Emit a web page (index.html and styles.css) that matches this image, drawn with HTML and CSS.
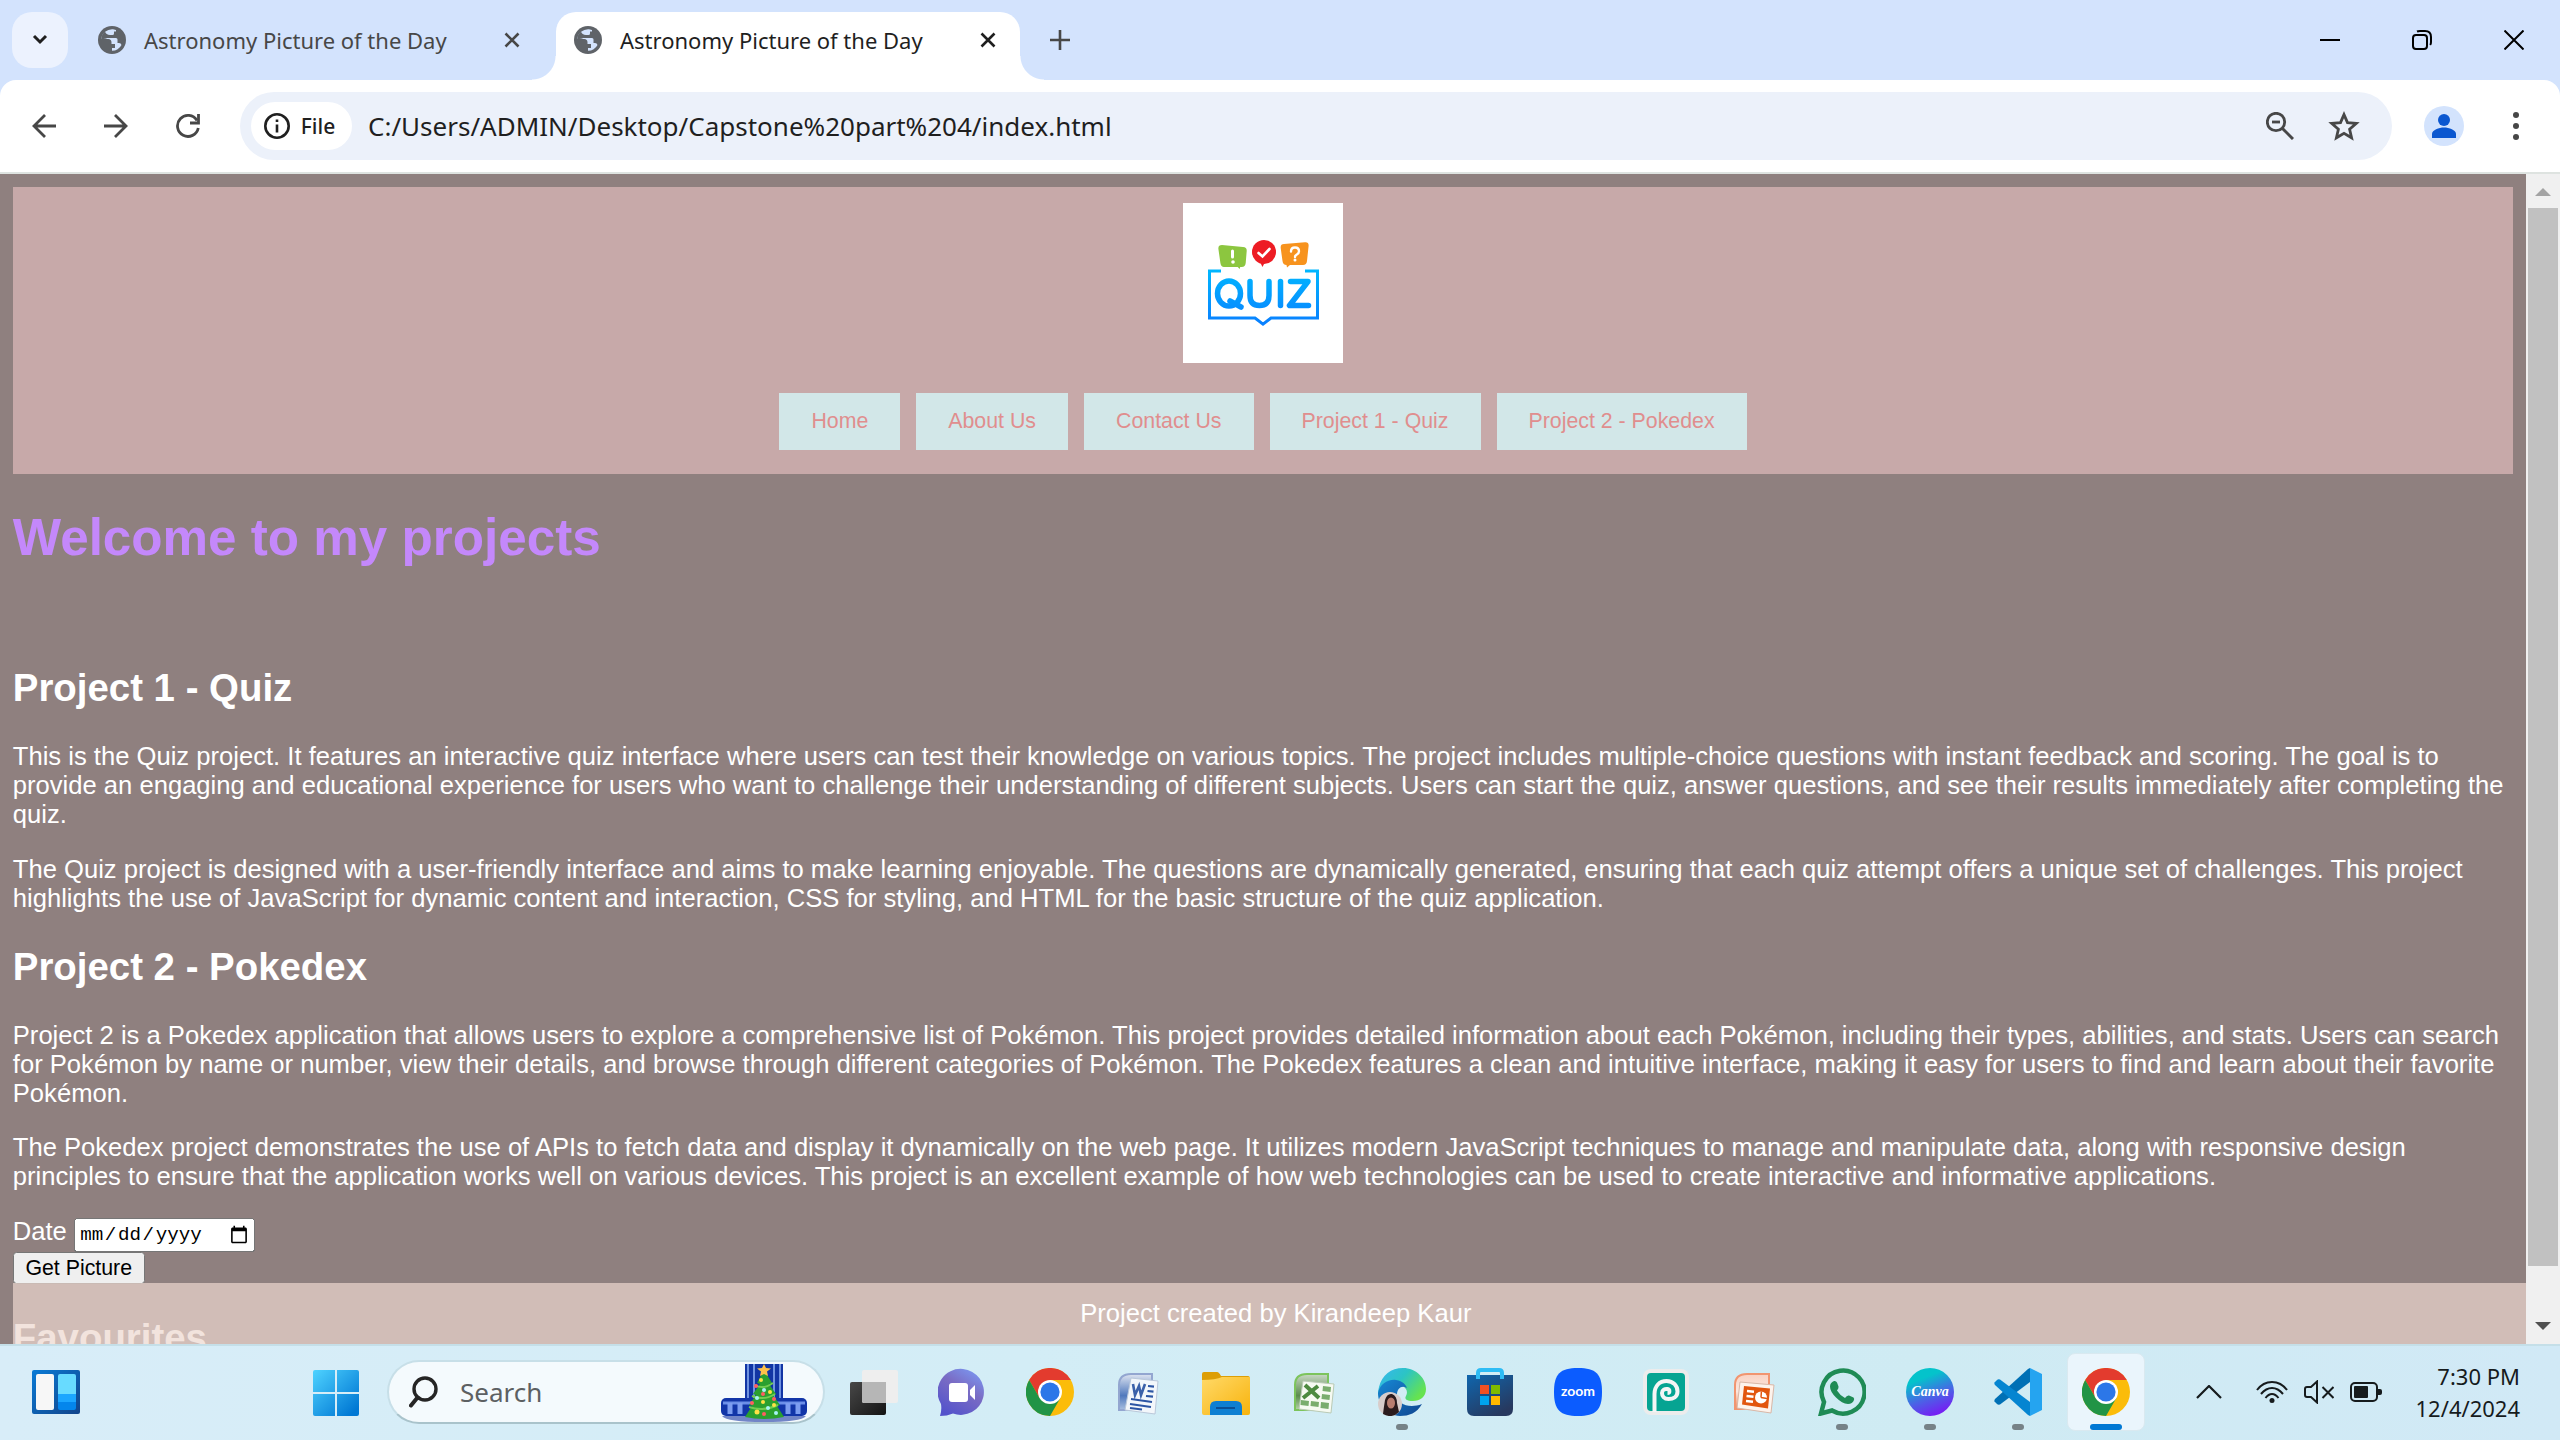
FILE: index.html
```html
<!DOCTYPE html>
<html lang="en-US">
<head>
<meta charset="utf-8">
<title>Astronomy Picture of the Day</title>
<link rel="stylesheet" href="styles.css">
</head>
<body>
<svg class="defs" aria-hidden="true">
  <defs>
    <linearGradient id="gStart" x1="0" y1="0" x2="1" y2="1"><stop offset="0" stop-color="#4fd3ff"/><stop offset=".9" stop-color="#0078d4"/></linearGradient>
    <linearGradient id="gWidget" x1="0" y1="0" x2="1" y2="1"><stop offset="0" stop-color="#0a7bd6"/><stop offset="1" stop-color="#12448a"/></linearGradient>
    <linearGradient id="gDark" x1="0" y1="0" x2="1" y2="1"><stop offset="0" stop-color="#484848"/><stop offset="1" stop-color="#141414"/></linearGradient>
    <linearGradient id="gChat" x1=".9" y1="0" x2=".3" y2="1"><stop offset="0" stop-color="#7b9bf5"/><stop offset=".45" stop-color="#7a6cc4"/><stop offset="1" stop-color="#5453cb"/></linearGradient>
    <linearGradient id="gFolder" x1="0" y1="0" x2="1" y2="1"><stop offset="0" stop-color="#ffd968"/><stop offset="1" stop-color="#f8b30c"/></linearGradient>
    <linearGradient id="gWord" x1="0" y1="0" x2="0" y2="1"><stop offset="0" stop-color="#dfe5f1"/><stop offset=".6" stop-color="#5079bd"/><stop offset="1" stop-color="#a9bfe0"/></linearGradient>
    <linearGradient id="gExcel" x1="0" y1="0" x2="0" y2="1"><stop offset="0" stop-color="#c9d8c5"/><stop offset=".6" stop-color="#5b8c4d"/><stop offset="1" stop-color="#b6d3a8"/></linearGradient>
    <linearGradient id="gPpt" x1="0" y1="0" x2="0" y2="1"><stop offset="0" stop-color="#f9d2c2"/><stop offset=".5" stop-color="#fbe7df"/><stop offset="1" stop-color="#ef8a5e"/></linearGradient>
    <linearGradient id="gEdgeTop" x1="0" y1="0" x2="1" y2=".6"><stop offset="0" stop-color="#38b6f2"/><stop offset=".5" stop-color="#2cc4c4"/><stop offset="1" stop-color="#66e34f"/></linearGradient>
    <linearGradient id="gEdgeLow" x1="0" y1="0" x2="1" y2="1"><stop offset="0" stop-color="#1788d4"/><stop offset="1" stop-color="#0f4590"/></linearGradient>
    <linearGradient id="gStore" x1="0" y1="0" x2=".6" y2="1"><stop offset="0" stop-color="#0f66ae"/><stop offset="1" stop-color="#27395f"/></linearGradient>
    <linearGradient id="gCanva" x1=".3" y1="0" x2=".7" y2="1"><stop offset=".2" stop-color="#04c3cb"/><stop offset=".6" stop-color="#4a63e6"/><stop offset="1" stop-color="#7c14f5"/></linearGradient>
    <linearGradient id="gQuiz" gradientUnits="userSpaceOnUse" x1="0" y1="66" x2="0" y2="124"><stop offset="0" stop-color="#00b8ff"/><stop offset="1" stop-color="#0a7dff"/></linearGradient>
    <symbol id="globe" viewBox="0 0 28 28">
      <circle cx="14" cy="14" r="14" fill="#5f6368"/>
      <path d="M15 3.200A11 11 0 0 0 3.200 13h7q3.300 0 3.300 3.500v1.500h3.500v4h-3v2.800A11 11 0 0 0 23.500 19q-.5-2-2.500-2h-1.500v-3.500q0-1.500-1.500-1.500h-6V9h2.500q1.500 0 1.500-1.500V5.500h2V4z" fill="#d3e3fd"/>
      <path d="M3.200 13A11 11 0 0 1 7 5.600q1 3.400 5 3.400v3H9q-1 1-5.800 1z" fill="#5f6368"/>
    </symbol>
    <symbol id="cross" viewBox="0 0 16 16"><path d="M1.500 1.500l13 13m0-13l-13 13" stroke="currentColor" stroke-width="2.600"/></symbol>
    <symbol id="chrome" viewBox="0 0 48 48">
      <circle cx="24" cy="24" r="24" fill="#fbbc0a"/>
      <path d="M24 12H44.800A24 24 0 0 0 3.200 12L13.600 30z" fill="#e33b2e"/>
      <path d="M13.600 30L3.200 12A24 24 0 0 0 24 48L34.400 30 24 24z" fill="#219446"/>
      <circle cx="24" cy="24" r="12" fill="#fff"/><circle cx="24" cy="24" r="9.600" fill="#2c77e8"/>
    </symbol>
  </defs>
</svg>

<header class="browser">
  <div class="tabstrip">
    <button class="tab-search" aria-label="Search tabs"><svg width="16" height="12" viewBox="0 0 16 12" fill="none"><path d="M2 2l6 6 6-6" stroke="#1f1f1f" stroke-width="3"/></svg></button>
    <div class="tab">
      <svg class="favicon"><use href="#globe"/></svg><span class="tab-title">Astronomy Picture of the Day</span>
      <button class="tab-close" aria-label="Close tab"><svg width="16" height="16"><use href="#cross"/></svg></button>
    </div>
    <div class="tab tab-active">
      <svg class="favicon"><use href="#globe"/></svg><span class="tab-title">Astronomy Picture of the Day</span>
      <button class="tab-close" aria-label="Close tab"><svg width="16" height="16"><use href="#cross"/></svg></button>
    </div>
    <button class="new-tab" aria-label="New tab"><svg width="20" height="20" viewBox="0 0 20 20"><path d="M10 0v20M0 10h20" stroke="#474747" stroke-width="2.600"/></svg></button>
    <div class="window-controls">
      <button aria-label="Minimize"><svg width="20" height="20" viewBox="0 0 20 20"><path d="M0 10h20" stroke="#000" stroke-width="2"/></svg></button>
      <button aria-label="Restore"><svg width="20" height="20" viewBox="0 0 20 20" fill="none" stroke="#000" stroke-width="2"><rect x="1" y="5" width="14" height="14" rx="3"/><path d="M5 1.500Q6 1 8 1h5q6 0 6 6v5q0 2-.8 3"/></svg></button>
      <button aria-label="Close"><svg width="20" height="20" viewBox="0 0 20 20"><path d="M.5.500l19 19m0-19l-19 19" stroke="#000" stroke-width="2"/></svg></button>
    </div>
  </div>
  <div class="toolbar">
    <button class="tool" aria-label="Back"><svg width="24" height="24" viewBox="0 0 24 24" fill="none" stroke="#474747" stroke-width="2.800"><path d="M24 12H2M13 1L2 12l11 11"/></svg></button>
    <button class="tool" aria-label="Forward"><svg width="24" height="24" viewBox="0 0 24 24" fill="none" stroke="#474747" stroke-width="2.800"><path d="M0 12h22M11 1l11 11-11 11"/></svg></button>
    <button class="tool" aria-label="Reload"><svg width="24" height="24" viewBox="0 0 24 24" fill="none" stroke="#474747" stroke-width="2.800"><path d="M21 6.500A10.500 10.500 0 1 0 22.300 14"/><path d="M22.500 0v9H14"/></svg></button>
    <div class="omnibox">
      <button class="chip"><svg width="26" height="26" viewBox="0 0 26 26"><circle cx="13" cy="13" r="11.700" fill="none" stroke="#1f1f1f" stroke-width="2.600"/><path d="M13 11.500v8M13 6.500v2.600" stroke="#1f1f1f" stroke-width="2.600"/></svg>File</button>
      <input class="address" type="text" aria-label="Address" value="C:/Users/ADMIN/Desktop/Capstone%20part%204/index.html">
      <button class="in-box" aria-label="Zoom"><svg width="28" height="28" viewBox="0 0 28 28" fill="none" stroke="#474747"><circle cx="10" cy="10" r="8.700" stroke-width="2.800"/><path d="M16.500 16.500L27 27" stroke-width="3"/><path d="M6 10h8" stroke-width="2.800"/></svg></button>
      <button class="in-box" aria-label="Bookmark"><svg width="32" height="30" viewBox="0 0 32 30"><path d="M16 3.600l3.500 8 8.800.8-6.700 5.800 2 8.600-7.600-4.500-7.600 4.500 2-8.600-6.700-5.800 8.800-.8z" fill="none" stroke="#474747" stroke-width="2.800"/></svg></button>
    </div>
    <button class="avatar" aria-label="Profile"><svg width="40" height="40" viewBox="0 0 40 40"><circle cx="20" cy="20" r="20" fill="#d3e3fd"/><circle cx="20" cy="14" r="6" fill="#0b57d0"/><path d="M8 32v-4c0-4 7-6.500 12-6.500S32 24 32 28v4z" fill="#0b57d0"/></svg></button>
    <button class="menu" aria-label="Menu"><svg width="6" height="28" viewBox="0 0 6 28" fill="#474747"><circle cx="3" cy="3" r="3"/><circle cx="3" cy="14" r="3"/><circle cx="3" cy="25" r="3"/></svg></button>
  </div>
</header>

<div class="viewport">
  <div class="document">
    <div class="page">
      <header class="site-header">
        <svg class="logo" viewBox="0 0 160 160" role="img" aria-label="Quiz">
          <rect width="160" height="160" fill="#fff"/>
          <path d="M39 42l21 2q4 .4 3.700 4l-1 12q-.4 4-4 4h-1.500l-.5 2-2-2H41q-3 0-3.600-4l-2-14q-.4-4 3.600-4z" fill="#8cc63f"/>
          <path d="M49.500 48v6" stroke="#fff" stroke-width="3" stroke-linecap="round"/><circle cx="50" cy="59" r="1.800" fill="#fff"/>
          <circle cx="81" cy="49" r="12" fill="#ed1c24"/><path d="M77 59h5l-2.500 5z" fill="#ed1c24"/>
          <path d="M75.500 50l4 3.500 7-7.500" fill="none" stroke="#fff" stroke-width="2.600" stroke-linecap="round"/>
          <path d="M101 41l21-1.700q4-.3 3.600 3.700l-1.600 15q-.4 4-4 4h-13l-3 2.500-.5-2.500q-3.500 0-4-4l-1.800-13q-.4-4 3.300-4z" fill="#f7931e"/>
          <path d="M108 48.500q0-4 4-4t4 3.700q0 2-2.200 3.300-1.800 1-1.800 2.500" fill="none" stroke="#fff" stroke-width="2.400" stroke-linecap="round"/><circle cx="112" cy="57" r="1.500" fill="#fff"/>
          <g fill="none" stroke="url(#gQuiz)" stroke-width="3">
            <path d="M38 68H26.500v47H72l8 6.200 8-6.200h46.500V68H122"/>
          </g>
          <g fill="none" stroke="url(#gQuiz)" stroke-width="5.500" stroke-linecap="round" stroke-linejoin="round">
            <ellipse cx="46" cy="90.500" rx="11.500" ry="12.500"/><path d="M47 98l11 6"/>
            <path d="M67 78.500v14q0 10 9.500 10t9.500-10v-14"/><path d="M97.500 78.500v24"/><path d="M107.500 78.500h17.500l-18.500 24H125.500"/>
          </g>
        </svg>
        <nav class="nav">
          <button>Home</button>
          <button>About Us</button>
          <button>Contact Us</button>
          <button>Project 1 - Quiz</button>
          <button>Project 2 - Pokedex</button>
        </nav>
      </header>
      <h1>Welcome to my projects</h1>
      <main>
        <section>
          <h2>Project 1 - Quiz</h2>
          <p>This is the Quiz project. It features an interactive quiz interface where users can test their knowledge on various topics. The project includes multiple-choice questions with instant feedback and scoring. The goal is to provide an engaging and educational experience for users who want to challenge their understanding of different subjects. Users can start the quiz, answer questions, and see their results immediately after completing the quiz.</p>
          <p>The Quiz project is designed with a user-friendly interface and aims to make learning enjoyable. The questions are dynamically generated, ensuring that each quiz attempt offers a unique set of challenges. This project highlights the use of JavaScript for dynamic content and interaction, CSS for styling, and HTML for the basic structure of the quiz application.</p>
        </section>
        <section>
          <h2>Project 2 - Pokedex</h2>
          <p>Project 2 is a Pokedex application that allows users to explore a comprehensive list of Pokémon. This project provides detailed information about each Pokémon, including their types, abilities, and stats. Users can search for Pokémon by name or number, view their details, and browse through different categories of Pokémon. The Pokedex features a clean and intuitive interface, making it easy for users to find and learn about their favorite Pokémon.</p>
          <p>The Pokedex project demonstrates the use of APIs to fetch data and display it dynamically on the web page. It utilizes modern JavaScript techniques to manage and manipulate data, along with responsive design principles to ensure that the application works well on various devices. This project is an excellent example of how web technologies can be used to create interactive and informative applications.</p>
        </section>
        <form class="picture-form">
          <div><label for="date">Date</label> <input type="date" id="date"></div>
          <button type="button">Get Picture</button>
        </form>
        <h2>Favourites</h2>
      </main>
      <footer class="site-footer">Project created by Kirandeep Kaur</footer>
    </div>
  </div>
  <div class="scrollbar" aria-hidden="true">
    <svg width="16" height="8" viewBox="0 0 16 8"><path d="M0 8L8 0l8 8z" fill="#a3a3a3"/></svg>
    <div class="track"><div class="thumb"></div></div>
    <svg width="16" height="8" viewBox="0 0 16 8"><path d="M0 0l8 8 8-8z" fill="#505050"/></svg>
  </div>
</div>

<footer class="taskbar">
  <button class="app" aria-label="Widgets"><svg width="48" height="48" viewBox="0 0 48 48"><rect y="2" width="48" height="44" rx="2" fill="url(#gWidget)"/><rect x="4" y="6" width="18" height="36" rx="2" fill="#f7f7f7"/><path d="M26 26V8q0-2 2-2h14q2 0 2 2v18z" fill="#68dbff"/><path d="M26 26h18v8H26z" fill="#1ca6ff"/><path d="M26 34h18v6q0 2-2 2H28q-2 0-2-2z" fill="#0486ec"/></svg></button>
  <div class="apps">
    <button class="app start" aria-label="Start"><svg width="48" height="48" viewBox="0 0 48 48" fill="url(#gStart)"><path d="M3 2h20v22H1V4q0-2 2-2zM25 2h20q2 0 2 2v20H25zM1 26h22v22H3q-2 0-2-2zM25 26h22v20q0 2-2 2H25z"/></svg></button>
    <label class="search">
      <svg width="29" height="32" viewBox="0 0 29 32" fill="none" stroke="#252525"><circle cx="16" cy="13" r="11" stroke-width="3.400"/><path d="M8.500 21.500L2 29.500" stroke-width="4" stroke-linecap="round"/></svg>
      <input type="search" placeholder="Search" aria-label="Search">
      <svg width="86" height="60" viewBox="0 0 86 60">
        <path d="M24 2h38v36H24z" fill="#1235a4"/><path d="M27 2v36M33 2v36M53 2v36M59 2v36" stroke="#6f92e0" stroke-width="2"/>
        <rect y="36" width="86" height="18" rx="5" fill="#1235a8"/><path d="M2 41h82" stroke="#6c8fe8" stroke-width="3"/><path d="M9 41v11M19 41v11M67 41v11M77 41v11" stroke="#7d9df0" stroke-width="5"/>
        <path d="M1 54h84q-5 6-42 6T1 54z" fill="#7285c7"/>
        <path d="M43 8l8 13-3 1 7 10-3 1 7 10-3 1 7 11q-20 4-39 0l7-11-3-1 7-10-3-1 7-10-3-1z" fill="#2ba02f"/>
        <path d="M34 23q8 5 18-2M31 34q12 5 23-2M28 45q14 5 29-2" fill="none" stroke="#72cd50" stroke-width="2"/>
        <path d="M43 2l2 4 5 .5-4 3 1 4.500-4-2-4 2 1-4.500-4-3 5-.5z" fill="#ffc24a"/>
        <g fill="#ffe145"><circle cx="40" cy="18" r="2"/><circle cx="49" cy="30" r="2"/><circle cx="42" cy="40" r="2"/><circle cx="36" cy="50" r="2.500"/><circle cx="53" cy="43" r="2"/></g>
        <g fill="#ff5d62"><circle cx="35" cy="24" r="2"/><circle cx="42" cy="32" r="2"/><circle cx="53" cy="37" r="2"/><circle cx="31" cy="41" r="2"/><circle cx="43" cy="52" r="2"/></g>
        <g fill="#a7f3f5"><circle cx="43" cy="28" r="2"/><circle cx="36" cy="36" r="2"/><circle cx="47" cy="46" r="2"/><circle cx="55" cy="51" r="2"/></g>
      </svg>
    </label>
    <button class="app" aria-label="Task view"><svg width="48" height="48" viewBox="0 0 48 48"><rect y="14" width="36" height="33" rx="2" fill="url(#gDark)"/><rect x="12" y="2" width="36" height="33" rx="2" fill="#eee"/><path d="M12 14h24v21H14q-2 0-2-2z" fill="#b6b6b6"/></svg></button>
    <button class="app" aria-label="Chat"><svg width="48" height="48" viewBox="0 0 48 48"><path d="M25 1a23 23 0 1 1-10 44.500Q9 48 2 48q2-6 1-12A23 23 0 0 1 25 1z" fill="url(#gChat)"/><rect x="11" y="15" width="19" height="19" rx="3" fill="#fff"/><path d="M32 22l5-5v15l-5-5z" fill="#fff"/></svg></button>
    <button class="app" aria-label="Chrome"><svg width="48" height="48"><use href="#chrome"/></svg></button>
    <button class="app" aria-label="Word"><svg width="48" height="48" viewBox="0 0 48 48"><path d="M5 42V17Q5 6 17 6h21v32l-5 4z" fill="url(#gWord)" stroke="#93a6d0" stroke-width="2"/><path d="M17 10l27 3-3 33-30-4z" fill="#f3f7fb" stroke="#bac8da"/><path d="M19 16l2 11 4-9 2 9 4-11" fill="none" stroke="#3b61a9" stroke-width="2.600"/><path d="M34 18l6 .6M33.500 23l6 .6M32 28l7 .7M17 31l21 3M16 36l21 3M16 40l12 1.500" stroke="#2c55a4" stroke-width="2.200"/></svg></button>
    <button class="app" aria-label="File Explorer"><svg width="48" height="48" viewBox="0 0 48 48"><path d="M0 12V6q0-2 2-2h13q2 0 4 4h27q2 0 2 3v4H0z" fill="#dd9e06"/><path d="M0 12q14 0 20-3h28v36q0 2-2 2H2q-2 0-2-2z" fill="url(#gFolder)"/><path d="M8 47V39q0-6 6-6h20q6 0 6 6v8z" fill="#0e7fd2"/><path d="M14 40h19" stroke="#0a4f95" stroke-width="2"/></svg></button>
    <button class="app" aria-label="Excel"><svg width="48" height="48" viewBox="0 0 48 48"><path d="M5 42V17Q5 6 17 6h21v32l-5 4z" fill="url(#gExcel)" stroke="#7cc45c" stroke-width="2"/><path d="M13 13l31 3-3 29-32-4z" fill="#f6faf1" stroke="#bacab5"/><path d="M15 17l14 13M28 18L13 30" stroke="#4d8a3f" stroke-width="4"/><path d="M33 18l8 1-.5 5-8-1zM32 26l8 1-.5 5-8-1zM31 34l8 1-.5 6-8-1zM21 33l8 1-.5 5-8-1zM11 32l8 1-.5 5-8-1z" fill="#7aad6d"/></svg></button>
    <button class="app running" aria-label="Edge"><svg width="48" height="48" viewBox="0 0 48 48"><path d="M1 19C4 7 13 0 25 0c13 0 23 10 23 21 0 8-6 12-13 12-6 0-9-2-7-5 3-5-1-11-8-11C11 17 4 20 0 27q0-5 1-8z" fill="url(#gEdgeTop)"/><path d="M0 25C2 16 10 11 18 12c7 1 10 5 11 8-5-3-10 0-10 7 0 9 12 14 25 9-5 9-13 12-22 12C9 47 0 37 0 25z" fill="url(#gEdgeLow)"/><circle cx="12" cy="36" r="12" fill="#d8cdcb"/><path d="M5 46q1-8 2-14 2-7 7-6 5 2 5 9l2 9q-7 7-16 2z" fill="#2b1b1d"/><ellipse cx="13" cy="35" rx="4" ry="5.500" fill="#b97e70"/></svg></button>
    <button class="app" aria-label="Microsoft Store"><svg width="48" height="48" viewBox="0 0 48 48"><path d="M1 7h46v34q0 7-7 7H8q-7 0-7-7z" fill="url(#gStore)"/><path d="M12 11V5q0-3 3-3h18q3 0 3 3v6" fill="none" stroke="#2dbcf5" stroke-width="4"/><path d="M14 17h9v9h-9z" fill="#f25022"/><path d="M25 17h9v9h-9z" fill="#7fba00"/><path d="M14 28h9v9h-9z" fill="#00a4ef"/><path d="M25 28h9v9h-9z" fill="#ffb900"/></svg></button>
    <button class="app" aria-label="Zoom"><svg width="48" height="48" viewBox="0 0 48 48"><path d="M24 0C42 0 48 6 48 24S42 48 24 48 0 42 0 24 6 0 24 0z" fill="#0b5cff"/><text x="24" y="28" text-anchor="middle" class="zoom-word">zoom</text></svg></button>
    <button class="app" aria-label="Photopea"><svg width="48" height="48" viewBox="0 0 48 48"><rect x="1" y="1" width="46" height="46" rx="8" fill="#ececec"/><rect x="5" y="5" width="38" height="38" rx="4" fill="#06a492"/><path d="M12.500 44V26c0-8 5-13 12-13s11 5 11 10.500S31 31 26.500 31 20 28 20 25s3-4.500 5.500-4 2.500 4 0 4" fill="none" stroke="#f5f5f5" stroke-width="4"/></svg></button>
    <button class="app" aria-label="PowerPoint"><svg width="48" height="48" viewBox="0 0 48 48"><path d="M5 41V17Q5 6 17 6h22v32l-6 3z" fill="url(#gPpt)" stroke="#f19570" stroke-width="2"/><path d="M10 14l34 3-3 28-34-5z" fill="#fdf3ec" stroke="#d9b7a7"/><path d="M14 18l26 2.500-2 20-26-4z" fill="#e2560e"/><path d="M17 23l7 .7M16.500 28l7 .7M16 33l7 .7" stroke="#fff" stroke-width="2.600"/><circle cx="31" cy="29.500" r="6" fill="#fff"/><path d="M31 29.500l.4-6M31 29.500l6 1" stroke="#e2560e" stroke-width="1.500"/></svg></button>
    <button class="app running" aria-label="WhatsApp"><svg width="48" height="48" viewBox="0 0 48 48"><path d="M3 45.500l3-11.500A21.500 21.500 0 1 1 14 42.500z" fill="none" stroke="#1f8b55" stroke-width="4.500"/><path d="M16 13q2-.5 3 1.500l1.500 4q.5 1.500-1.500 4 3 5 8 7.500 2-3 4-2.500l4.500 2q1 1 .5 2.500-1.500 4-6 4-6-.5-12-6.500t-6-11q0-4 4-5.500z" fill="#1f8b55"/></svg></button>
    <button class="app running" aria-label="Canva"><svg width="48" height="48" viewBox="0 0 48 48"><circle cx="24" cy="24" r="24" fill="url(#gCanva)"/><text x="24" y="28" text-anchor="middle" class="canva-word">Canva</text></svg></button>
    <button class="app running" aria-label="Visual Studio Code"><svg width="48" height="48" viewBox="0 0 48 48"><path d="M36 0v14L6 36.500Q4 37 3 36L.5 33.500Q0 32 1 31L34 1z" fill="#0070b5"/><path d="M36 48V34L6 11.500Q4 11 3 12L.5 14.500Q0 16 1 17L34 47z" fill="#0585d1"/><path d="M36 0l12 6v36l-12 6z" fill="#25a4f0"/></svg></button>
    <button class="app running active" aria-label="Chrome, active"><svg width="48" height="48"><use href="#chrome"/></svg></button>
  </div>
  <div class="tray">
    <button aria-label="Show hidden icons"><svg width="26" height="14" viewBox="0 0 26 14"><path d="M1 13L13 1l12 12" fill="none" stroke="#161b1d" stroke-width="2.200"/></svg></button>
    <button class="status" aria-label="Network, volume and battery">
      <svg width="32" height="24" viewBox="0 0 32 24" fill="none" stroke="#161b1d" stroke-width="2"><path d="M1 10Q7 2 16 2t15 8M5 14q5-6 11-6t11 6M9.500 18q3-4 6.500-4t6.500 4"/><circle cx="16" cy="20.500" r="2.500" fill="#161b1d" stroke="none"/></svg>
      <svg width="30" height="24" viewBox="0 0 30 24" fill="none" stroke="#161b1d" stroke-width="2"><path d="M1 9q0-2 2-2h4l6-5.500v21L7 17H3q-2 0-2-2zM18.500 7l11 11m0-11l-11 11"/></svg>
      <svg width="32" height="20" viewBox="0 0 32 20"><rect x="1" y="1" width="26" height="18" rx="4" fill="none" stroke="#161b1d" stroke-width="2"/><rect x="4" y="4" width="14" height="12" rx="1" fill="#161b1d"/><path d="M28 7h2q2 0 2 2v2q0 2-2 2h-2z" fill="#161b1d"/></svg>
    </button>
    <div class="clock"><time>7:30 PM</time><time>12/4/2024</time></div>
  </div>
</footer>
</body>
</html>
```
FILE: styles.css
```css
* { box-sizing: border-box; }

html, body { height: 100%; }

body {
  margin: 0;
  display: flex;
  flex-direction: column;
  overflow: hidden;
  font-family: "Noto Sans", "Open Sans", sans-serif;
}

button { cursor: pointer; }
.defs { position: absolute; width: 0; height: 0; }

/* Browser frame */
.browser { flex: none; background: #d3e3fd; color: #1f1f1f; }
.browser button, .taskbar button {
  display: flex;
  align-items: center;
  justify-content: center;
  padding: 0;
  border: 0;
  background: none;
  font: inherit;
  color: inherit;
}
.tabstrip { display: flex; height: 80px; padding: 12px 0 0 12px; }
.browser .tab-search { width: 56px; height: 56px; border-radius: 20px; background: #ecf2fe; }
.tab {
  display: flex;
  align-items: center;
  width: 464px;
  height: 56px;
  padding: 0 16px 0 18px;
  color: #474747;
  font-size: 22px;
}
.tab:not(.tab-active) { width: 476px; margin-left: 12px; padding-right: 28px; }
.favicon { flex: none; width: 28px; height: 28px; }
.tab-title { flex: 1; margin-left: 18px; white-space: nowrap; }
.browser .tab-close { width: 32px; height: 32px; }
.tab-active {
  position: relative;
  height: 68px;
  padding-bottom: 12px;
  border-radius: 20px 20px 0 0;
  background: #fff;
  color: #1f1f1f;
}
.tab-active::before, .tab-active::after {
  content: "";
  position: absolute;
  bottom: 0;
  width: 24px;
  height: 24px;
}
.tab-active::before { right: 100%; background: radial-gradient(circle at 0 0, transparent 23px, #fff 24px); }
.tab-active::after { left: 100%; background: radial-gradient(circle at 100% 0, transparent 23px, #fff 24px); }
.browser .new-tab { width: 56px; height: 56px; margin-left: 12px; }
.window-controls { display: flex; margin-left: auto; }
.browser .window-controls button { width: 92px; height: 56px; }

.toolbar {
  display: flex;
  align-items: center;
  height: 94px;
  padding: 0 8px;
  border-bottom: 2px solid #dee3e0;
  border-radius: 16px 16px 0 0;
  background: #fff;
}
.browser .tool { width: 72px; height: 56px; }
.omnibox {
  display: flex;
  align-items: center;
  flex: 1;
  height: 68px;
  margin-left: 16px;
  padding: 0 16px 0 11px;
  border-radius: 34px;
  background: #ecf1fa;
}
.browser .chip { gap: 11px; width: 101px; height: 48px; padding-right: 4px; border-radius: 24px; background: #fff; font-size: 21px; font-weight: 500; }
.address { flex: 1; min-width: 0; margin-left: 16px; padding: 0; border: 0; background: none; color: #1f1f1f; font: 26px "Noto Sans", "Open Sans", sans-serif; }
.browser .in-box { width: 64px; height: 56px; }
.browser .avatar { width: 40px; height: 40px; margin-left: 32px; }
.browser .menu { width: 56px; height: 56px; margin: 0 8px 0 24px; }

/* Browser viewport, shown at the 80% zoom level of a 2x screen */
.viewport { display: flex; flex: 1; min-height: 0; }
.document { position: relative; flex: 1; min-width: 0; overflow: hidden; background: #8f807f; }
.page {
  zoom: 1.6;
  padding: 8px;
  font-family: Arial, "Liberation Sans", sans-serif;
  font-size: 16px;
  color: #fff;
}
.site-header { padding: 10px 10px 15px; background: #c7a9a9; text-align: center; }
.logo { display: block; width: 100px; height: 100px; margin: 0 auto 19px; }
.nav { display: flex; justify-content: center; gap: 10px; }
.nav button { padding: 10px 20px; border: 0; background: #d2e7e8; color: #e08e8e; font-family: inherit; }
h1 { margin: 21px 0; color: #c488fb; font-size: 32px; }
main { padding-top: 21px; }
h2 { margin: 20px 0; font-size: 24px; }
p { margin: 16px 0; }
.picture-form input { width: 113px; height: 21px; font-family: "Liberation Mono", monospace; font-size: 12px; }
.picture-form button { display: block; height: 20px; font-family: inherit; }
.site-footer {
  position: absolute;
  bottom: 0;
  left: 8px;
  width: 100%;
  padding: 10px;
  background: rgba(237, 215, 206, .7);
  text-align: center;
}

.scrollbar {
  display: flex;
  flex-direction: column;
  align-items: center;
  flex: none;
  width: 34px;
  padding: 14px 2px;
  background: #f0f0f0;
}
.track { flex: 1; width: 100%; padding: 12px 0; }
.thumb { height: 96%; background: #c1c1c1; }

/* Taskbar */
.taskbar {
  position: relative;
  z-index: 1;
  display: flex;
  align-items: center;
  flex: none;
  height: 96px;
  padding: 0 40px 2px 12px;
  border-top: 2px solid #c5dfe8;
  background: linear-gradient(90deg, #d8edf8, #d3edf6 40%, #cfebf3 75%, #d1e9f6);
}
.taskbar .app { position: relative; flex: none; width: 88px; height: 78px; }
.apps { display: flex; align-items: center; margin-left: 192px; }
.search {
  display: flex;
  align-items: center;
  width: 438px;
  height: 64px;
  margin: 0 5px 0 7px;
  padding: 0 16px 0 20px;
  border: 2px solid #c7dfe8;
  border-bottom-color: #a9c3cb;
  border-radius: 32px;
  background: #f4fafd;
}
.search input { flex: 1; min-width: 0; margin-left: 22px; padding: 0; border: 0; background: none; font: 26px "Noto Sans", "Open Sans", sans-serif; }
.search input::placeholder { color: #5c6062; opacity: 1; }
.running::after {
  content: "";
  position: absolute;
  bottom: 1px;
  left: 38px;
  width: 12px;
  height: 6px;
  border-radius: 3px;
  background: #768287;
}
.active::before {
  content: "";
  position: absolute;
  z-index: -1;
  inset: 0 5px;
  border: 1px solid #d9e9f0;
  border-radius: 8px;
  background: #eaf5fc;
}
.active::after { left: 28px; width: 32px; background: #0078d4; }
.zoom-word { fill: #fff; font: bold 14px Lato, sans-serif; }
.canva-word { fill: #fff; font: italic bold 14px "Liberation Serif", serif; }
.tray { display: flex; align-items: center; margin-left: auto; color: #161b1d; }
.taskbar .status { gap: 16px; margin: 0 32px 0 34px; }
.clock { display: flex; flex-direction: column; width: 106px; align-items: flex-end; font-size: 22px; line-height: 32px; white-space: nowrap; }
```
